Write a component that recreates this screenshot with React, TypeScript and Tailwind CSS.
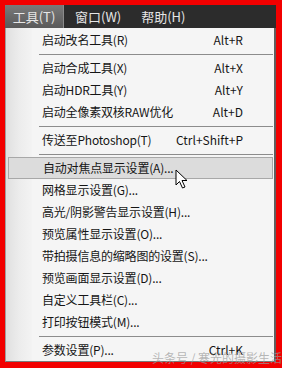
import React from "react";

type Item = { label?: string; shortcut?: string; sep?: boolean; active?: boolean };

const items: Item[] = [
  { label: "启动改名工具(R)", shortcut: "Alt+R" },
  { sep: true },
  { label: "启动合成工具(X)", shortcut: "Alt+X" },
  { label: "启动HDR工具(Y)", shortcut: "Alt+Y" },
  { label: "启动全像素双核RAW优化", shortcut: "Alt+D" },
  { sep: true },
  { label: "传送至Photoshop(T)", shortcut: "Ctrl+Shift+P" },
  { sep: true },
  { label: "自动对焦点显示设置(A)...", active: true },
  { label: "网格显示设置(G)..." },
  { label: "高光/阴影警告显示设置(H)..." },
  { label: "预览属性显示设置(O)..." },
  { label: "带拍摄信息的缩略图的设置(S)..." },
  { label: "预览画面显示设置(D)..." },
  { label: "自定义工具栏(C)..." },
  { label: "打印按钮模式(M)..." },
  { sep: true },
  { label: "参数设置(P)...", shortcut: "Ctrl+K" },
];

export default function App() {
  return (
    <div
      className="w-[282px] h-[368px] bg-[#f20000] pl-[5px] pr-[6px] pt-[5px] pb-[6px] flex flex-col relative overflow-hidden"
      style={{ fontFamily: '"Noto Sans CJK SC", "Noto Sans", sans-serif' }}
    >
      <div className="h-[23px] bg-[#2c2c2c] flex items-stretch text-[13px] text-[#e6e6e6]">
        <div className="w-[59px] flex items-center justify-center bg-gradient-to-b from-[#7a7a7a] to-[#5a5a5a] border-r border-[#8a8a8a]">
          工具(T)
        </div>
        <div className="px-[10px] flex items-center ml-[1px]">窗口(W)</div>
        <div className="px-[10px] flex items-center">帮助(H)</div>
      </div>
      <div className="flex-1 relative bg-[#f5f5f5] border-l border-[#a0a0a0] border-r-[2px] border-r-[#5f5f5f] border-b border-b-[#7a7a7a] pt-[1px] text-[12px] text-[#151515]">
        <div className="absolute left-0 top-0 bottom-0 w-[26px] bg-gradient-to-r from-[#e0e0e0] via-[#ececec] to-[#f3f3f3]" />
        <div className="relative flex flex-col">
          {items.map((it, i) =>
            it.sep ? (
              <div key={i} className="h-[6px] flex items-center pl-[33px] pr-[1px]">
                <div className="h-px w-full bg-[#8c8c8c]" />
              </div>
            ) : (
              <div
                key={i}
                className={
                  it.active
                    ? "h-[22px] flex items-center mx-[2px] mr-[1px] pl-[34px] pr-[30px] bg-[#dcdcdc] border border-[#a8a8a8]"
                    : "h-[22px] flex items-center pl-[36px] pr-[31px]"
                }
              >
                <span className="flex-1 whitespace-nowrap tracking-[-0.2px]">{it.label}</span>
                {it.shortcut && <span className="whitespace-nowrap">{it.shortcut}</span>}
              </div>
            )
          )}
        </div>
        <svg className="absolute left-[169px] top-[141px]" width="14" height="20" viewBox="0 0 14 20">
          <path
            d="M1 1 L1 16 L4.5 12.5 L7.5 19 L10 18 L7 11.5 L12 11.5 Z"
            fill="#ffffff"
            stroke="#000000"
            strokeWidth="1"
            strokeLinejoin="round"
          />
        </svg>
        <div className="absolute left-[146px] top-[321px] text-[12px] text-[#9a9a9a]/70 whitespace-nowrap">
          头条号 / 寒光的摄影生活
        </div>
      </div>
    </div>
  );
}
